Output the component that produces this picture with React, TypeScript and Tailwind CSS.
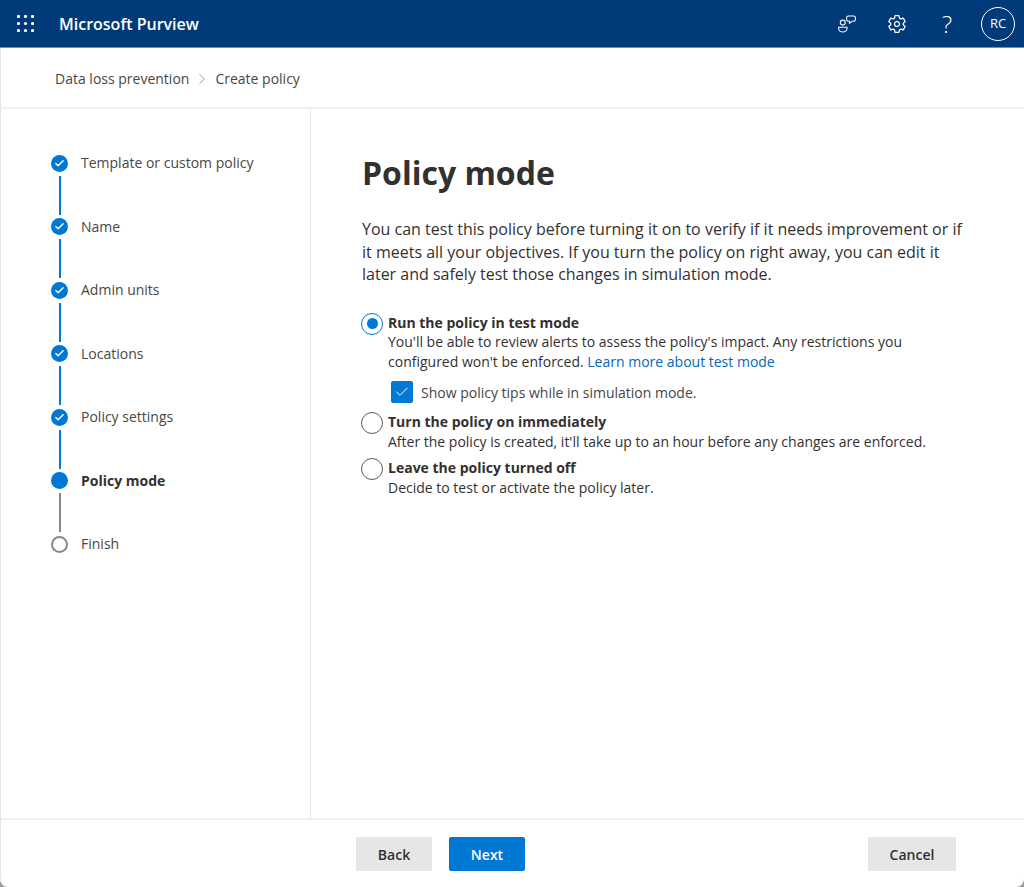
import React from 'react';
import { ChevronRight, Check } from 'lucide-react';
import { IoSettingsOutline } from 'react-icons/io5';

const font = "font-['Open_Sans','Noto_Sans',sans-serif]";

const steps = [
  { label: 'Template or custom policy', state: 'done' },
  { label: 'Name', state: 'done' },
  { label: 'Admin units', state: 'done' },
  { label: 'Locations', state: 'done' },
  { label: 'Policy settings', state: 'done' },
  { label: 'Policy mode', state: 'current' },
  { label: 'Finish', state: 'todo' },
];

const WaffleIcon = () => (
  <svg width="17" height="17" viewBox="0 0 17 17" fill="white">
    {[1.5, 8.5, 15.5].map((y) =>
      [1.5, 8.5, 15.5].map((x) => <circle key={`${x}-${y}`} cx={x} cy={y} r="1.6" />)
    )}
  </svg>
);

const FeedbackIcon = () => (
  <svg width="18" height="18" viewBox="0 0 18 18" fill="none" stroke="white" strokeWidth="1.1">
    <circle cx="4.8" cy="7.6" r="2.5" />
    <path d="M0.6 12.2h8.4v1.4c0 2-2 3.4-4.2 3.4s-4.2-1.4-4.2-3.4z" />
    <path d="M10.5 1h5c1 0 1.9.8 1.9 1.8v1.6c0 1-.9 1.8-1.9 1.8h-1.4l-2.6 2.2v-2.2h-1c-1 0-1.9-.8-1.9-1.8V2.8c0-1 .9-1.8 1.9-1.8z" />
  </svg>
);

const Step = ({ label, state, last }: { label: string; state: string; last: boolean }) => (
  <div className={`flex ${last ? 'h-5' : 'h-[63.5px]'}`}>
    <div className="flex flex-col items-center w-[17px] mr-[13px]">
      {state === 'done' && (
        <div className="w-[17px] h-[17px] rounded-full bg-[#0078d4] flex items-center justify-center shrink-0 mt-[1.5px]">
          <Check className="w-[11px] h-[11px] text-white" strokeWidth={3} />
        </div>
      )}
      {state === 'current' && <div className="w-[17px] h-[17px] rounded-full bg-[#0078d4] shrink-0 mt-[1.5px]" />}
      {state === 'todo' && <div className="w-[17px] h-[17px] rounded-full border-2 border-[#8a8886] bg-white shrink-0 mt-[1.5px]" />}
      {!last && (
        <div className={`w-[2px] h-[39px] mt-[4px] ${state === 'done' ? 'bg-[#0078d4]' : 'bg-[#8a8886]'}`} />
      )}
    </div>
    <span className={`text-[14px] leading-[19px] ${state === 'current' ? 'font-bold text-[#323130]' : 'text-[#484644]'}`}>
      {label}
    </span>
  </div>
);

const Radio = ({ checked }: { checked?: boolean }) => (
  <div className={`w-[22px] h-[22px] rounded-full border-[1.5px] bg-white flex items-center justify-center shrink-0 ${checked ? 'border-[#0078d4]' : 'border-[#605e5c]'}`}>
    {checked && <div className="w-[11px] h-[11px] rounded-full bg-[#0078d4]" />}
  </div>
);

const Option = ({ checked, title, children }: { checked?: boolean; title: string; children: React.ReactNode }) => (
  <div className="flex -ml-[1px]">
    <Radio checked={checked} />
    <div className="ml-[5px] text-[#323130] text-[14px] leading-[19.5px]">
      <div className="font-bold">{title}</div>
      {children}
    </div>
  </div>
);

export default function App() {
  return (
    <div className="h-[887px] w-[1024px] bg-[#9a9a9a] overflow-hidden">
      <div className={`h-full flex flex-col bg-white rounded-b-[8px] overflow-hidden ${font}`}>
        <header className="h-[48px] bg-[#003a78] border-b border-[#6f8fb5] flex items-center shrink-0">
          <div className="ml-[17px] mr-[25px] flex items-center">
            <WaffleIcon />
          </div>
          <span className="text-white text-[16px] font-semibold">Microsoft Purview</span>
          <div className="ml-auto flex items-center">
            <FeedbackIcon />
            <IoSettingsOutline className="w-[20px] h-[20px] text-white ml-[31px]" />
            <span className="text-white text-[24px] font-light ml-[35px] leading-none">?</span>
            <div className="w-[34px] h-[34px] rounded-full border border-white text-white text-[13px] flex items-center justify-center ml-[29px] mr-[9px]">
              RC
            </div>
          </div>
        </header>

        <div className="h-[61px] pt-[2px] border-b-2 border-[#f0f0f0] border-l border-l-[#e5e5e5] flex items-center pl-[54px] text-[14px] text-[#484644] shrink-0">
          <span>Data loss prevention</span>
          <ChevronRight className="w-[18px] h-[18px] mx-[4px] text-[#8a8886]" strokeWidth={1.1} />
          <span>Create policy</span>
        </div>

        <div className="flex flex-1 min-h-0 border-l border-[#e5e5e5]">
          <aside className="w-[310px] border-r border-[#e8e8e8] pl-[50px] pt-[44px] shrink-0">
            {steps.map((s, i) => (
              <Step key={s.label} label={s.label} state={s.state} last={i === steps.length - 1} />
            ))}
          </aside>
          <main className="flex-1 pl-[51px] pr-[50px] pt-[40px]">
            <h1 className="text-[32px] leading-[48px] font-bold text-[#323130]">Policy mode</h1>
            <p className="mt-[21px] text-[16px] leading-[22.5px] text-[#323130]">
              You can test this policy before turning it on to verify if it needs improvement or if it meets all your objectives. If you turn the policy on right away, you can edit it later and safely test those changes in simulation mode.
            </p>
            <div className="mt-[27px]">
              <Option checked title="Run the policy in test mode">
                <div>You'll be able to review alerts to assess the policy's impact. Any restrictions you</div>
                <div>
                  configured won't be enforced. <span className="text-[#0067b8]">Learn more about test mode</span>
                </div>
              </Option>
              <div className="flex items-center ml-[29px] mt-[10px] mb-[9px] text-[14px] text-[#484644]">
                <div className="w-[22px] h-[22px] bg-[#0078d4] rounded-[2px] flex items-center justify-center mr-[8px]">
                  <Check className="w-[16px] h-[16px] text-white" strokeWidth={1.5} />
                </div>
                Show policy tips while in simulation mode.
              </div>
              <Option title="Turn the policy on immediately">
                <div>After the policy is created, it'll take up to an hour before any changes are enforced.</div>
              </Option>
              <div className="mt-[7px]">
                <Option title="Leave the policy turned off">
                  <div>Decide to test or activate the policy later.</div>
                </Option>
              </div>
            </div>
          </main>
        </div>

        <footer className="h-[69px] border-t-2 border-[#f0f0f0] border-l border-l-[#e5e5e5] flex items-center shrink-0 pt-[1px]">
          <button className="ml-[355px] w-[76px] h-[34px] bg-[#e6e6e6] rounded-[2px] text-[14px] font-semibold text-[#323130]">Back</button>
          <button className="ml-[17px] w-[76px] h-[34px] bg-[#0078d4] rounded-[2px] text-[14px] font-semibold text-white">Next</button>
          <button className="ml-auto mr-[68px] w-[88px] h-[34px] bg-[#e6e6e6] rounded-[2px] text-[14px] font-semibold text-[#323130]">Cancel</button>
        </footer>
      </div>
    </div>
  );
}
